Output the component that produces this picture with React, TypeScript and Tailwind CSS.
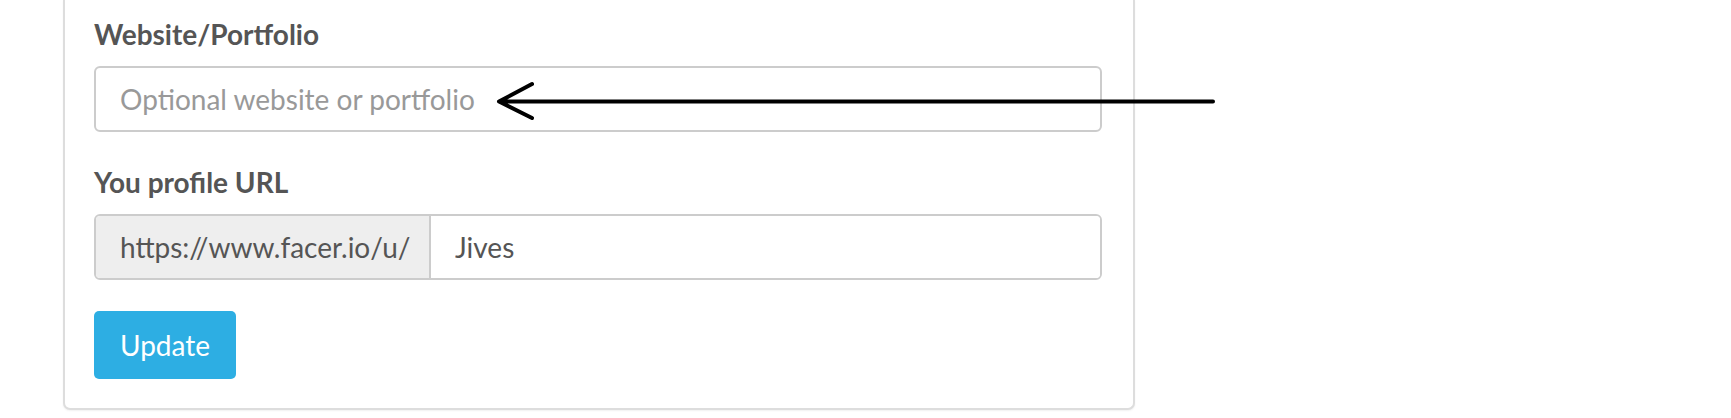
import React from "react";

export default function App() {
  return (
    <div
      className="relative w-[1731px] h-[418px] overflow-hidden bg-white"
      style={{ fontFamily: "Lato, 'Open Sans', sans-serif" }}
    >
      <div className="ml-[63px] w-[1072px] border-x-2 border-b-2 border-[#dddddd] rounded-b-[7px] pt-[18px] pl-[29px] pr-[31px] pb-[29px] bg-white shadow-[0_1px_2px_rgba(0,0,0,0.06)]">
        <label className="block text-[28px] leading-[32px] font-bold text-[#555555] mb-[16px]">
          Website/Portfolio
        </label>
        <input
          type="text"
          placeholder="Optional website or portfolio"
          className="block w-full h-[66px] border-2 border-[#cccccc] rounded-[6px] px-[24px] text-[28px] text-[#555555] placeholder:text-[#999999] outline-none bg-white"
        />
        <label className="block text-[28px] leading-[32px] font-bold text-[#555555] mt-[34px] mb-[16px]">
          You profile URL
        </label>
        <div className="flex w-full h-[66px] border-2 border-[#cccccc] rounded-[6px] overflow-hidden">
          <div className="flex items-center bg-[#eeeeee] pl-[24px] pr-[19px] text-[28px] text-[#555555] border-r-2 border-[#cccccc] w-[335px] whitespace-nowrap">
            https://www.facer.io/u/
          </div>
          <input
            type="text"
            defaultValue="Jives"
            className="flex-1 px-[24px] text-[28px] text-[#555555] outline-none bg-white"
          />
        </div>
        <button className="block mt-[31px] h-[68px] w-[142px] rounded-[5px] bg-[#2daee3] text-white text-[28px]">
          Update
        </button>
      </div>
      <svg
        className="absolute left-0 top-0 pointer-events-none"
        width="1731"
        height="418"
        viewBox="0 0 1731 418"
      >
        <path
          d="M499 101.5 L1213 101.5 M532 84 L499 101.5 L532 118"
          fill="none"
          stroke="#000"
          strokeWidth="4"
          strokeLinecap="round"
          strokeLinejoin="round"
        />
      </svg>
    </div>
  );
}
